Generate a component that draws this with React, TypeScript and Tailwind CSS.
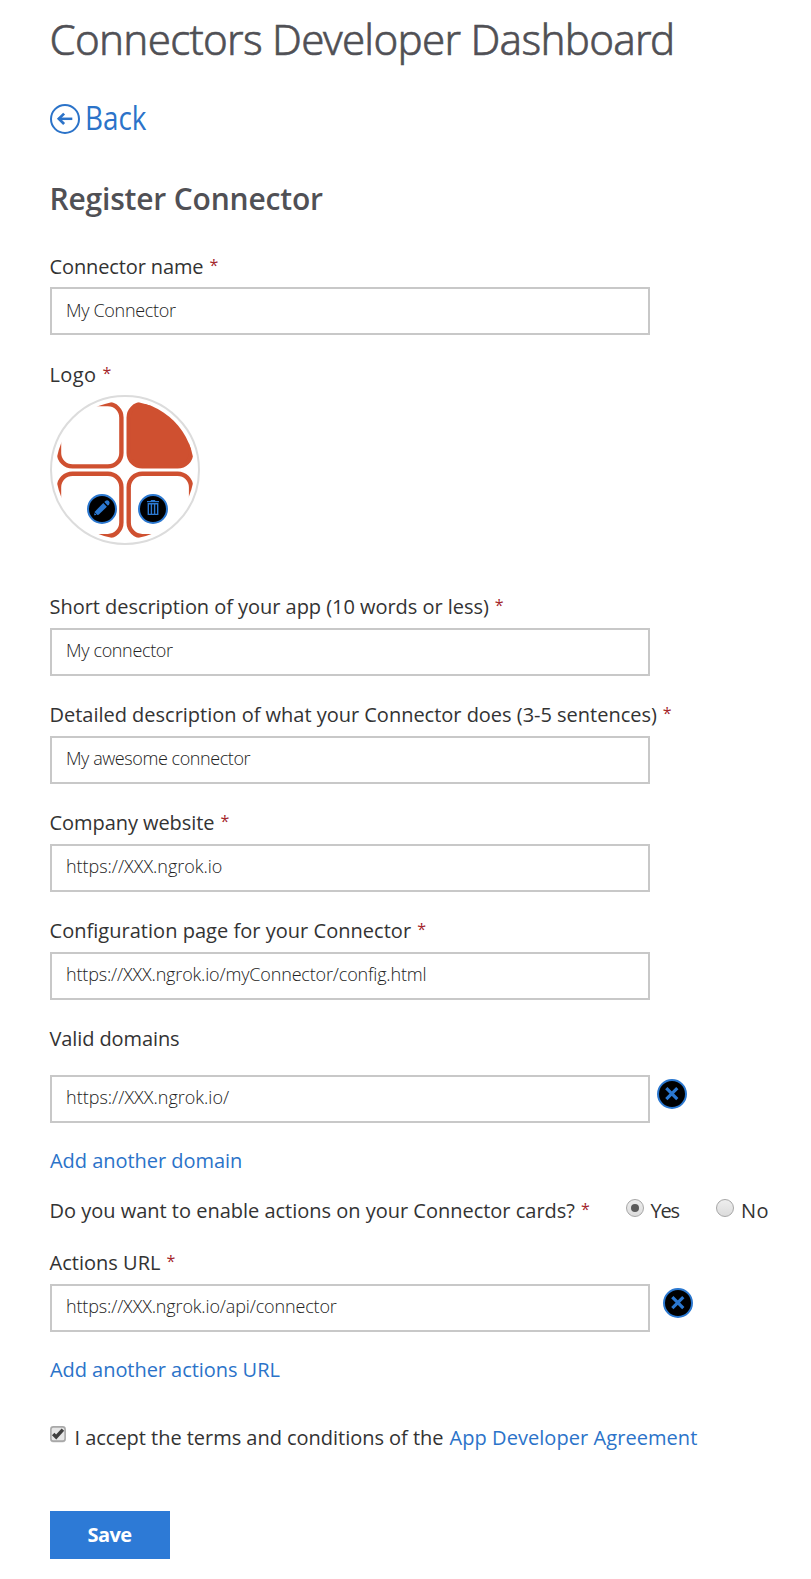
import type { ReactNode } from 'react';

const LABEL = 'block whitespace-nowrap text-[20px] leading-[30px] text-[#333]';
const LINK = 'block w-fit whitespace-nowrap text-[20px] leading-[30px] text-[#2b73c9]';

function Star() {
  return <span className="relative -top-[3px] ml-[6px] text-[16px] leading-none tracking-normal text-[#a4262c]">*</span>;
}

function Label({ children, required = false, tracking = '' }: { children: ReactNode; required?: boolean; tracking?: string }) {
  return (
    <label className={`-ml-[0.5px] ${LABEL}`}>
      <span className={tracking}>{children}</span>
      {required && <Star />}
    </label>
  );
}

function TextBox({ value, tracking, pad = 'pb-1' }: { value: string; tracking: string; pad?: string }) {
  return (
    <input
      type="text"
      defaultValue={value}
      className={`block h-12 w-[600px] shrink-0 rounded-none border-2 border-[#c8c8c8] bg-white pl-[14px] pr-3 text-[18px] font-light text-[#222] outline-none ${pad} ${tracking}`}
    />
  );
}

function Field({ label, value, labelTracking, valueTracking }: { label: string; value: string; labelTracking: string; valueTracking: string }) {
  return (
    <div className="flex flex-col gap-1.5">
      <Label required tracking={labelTracking}>{label}</Label>
      <TextBox value={value} tracking={valueTracking} />
    </div>
  );
}

function RemoveButton() {
  return (
    <button type="button" aria-label="Remove" className="size-[30px] shrink-0">
      <svg viewBox="0 0 30 30" className="size-[30px]">
        <circle cx="15" cy="15" r="14" fill="#000" stroke="#2b78d0" strokeWidth="2" />
        <path d="M9.3 9.1L20.3 20.1M20.3 9.1L9.3 20.1" stroke="#2b78d0" strokeWidth="3.2" />
      </svg>
    </button>
  );
}

function Logo() {
  return (
    <svg viewBox="0 0 150 150" className="size-[150px]">
      <defs>
        <clipPath id="disc">
          <circle cx="75" cy="75" r="69.2" />
        </clipPath>
      </defs>
      <circle cx="75" cy="75" r="74" fill="#fff" stroke="#dcdcdc" strokeWidth="2" />
      <g clipPath="url(#disc)" fill="none" stroke="#cf5030" strokeWidth="4.4">
        <rect x="9" y="9" width="62.4" height="62.4" rx="13.5" />
        <rect x="78.7" y="9" width="62.4" height="62.4" rx="13.5" fill="#cf5030" />
        <rect x="9" y="78.7" width="62.4" height="62.4" rx="13.5" />
        <rect x="78.7" y="78.7" width="62.4" height="62.4" rx="13.5" />
      </g>
      <g transform="translate(37 99)">
        <circle cx="15" cy="15" r="14" fill="#000" stroke="#2b78d0" strokeWidth="2" />
        <path d="M7 21.2L8 17.4L16.3 9.1L19.9 12.7L11.6 20.8Z" fill="#2b78d0" />
        <path d="M7.9 18.8L10 20.9" stroke="#000" strokeWidth="0.8" />
        <path d="M17.3 8.1L18.7 6.8Q20.2 5.7 21.9 7.1Q23.3 8.8 22.2 10.3L20.9 11.7Z" fill="#2b78d0" />
      </g>
      <g transform="translate(88 99)">
        <circle cx="15" cy="15" r="14" fill="#000" stroke="#2b78d0" strokeWidth="2" />
        <path d="M9 7.6H21M12.8 6.6H17.2" stroke="#2b78d0" strokeWidth="1.3" />
        <path d="M10.3 9.8H19.7V20.4H10.3ZM13.4 9.8V20.4M16.6 9.8V20.4" fill="none" stroke="#2b78d0" strokeWidth="1.4" />
      </g>
    </svg>
  );
}

function Radio({ checked = false }: { checked?: boolean }) {
  return (
    <span
      role="radio"
      aria-checked={checked}
      className="mt-[3px] flex size-[18px] shrink-0 items-center justify-center rounded-full border border-[#a6a6a6] bg-linear-to-b from-[#eeeeee] to-[#dcdcdc]"
    >
      {checked && <span className="size-2 rounded-full bg-[#5c5c5c]" />}
    </span>
  );
}

export default function App() {
  return (
    <div className="min-h-[1579px] w-[811px] bg-white pl-[50px] pt-[9px] font-['Open_Sans','Noto_Sans',sans-serif]">
      <h1 className="-ml-[0.5px] h-[58px] whitespace-nowrap font-['Noto_Sans','Open_Sans',sans-serif] text-[42px] font-light leading-[60px] tracking-[-0.71px] text-[#505055] [-webkit-text-stroke:0.6px_#505055]">
        Connectors Developer Dashboard
      </h1>

      <a className="mt-7 flex h-11 w-fit items-start text-[#2b73c9]">
        <svg viewBox="0 0 30 30" className="mt-[9px] size-[30px]" fill="none" stroke="#2b73c9">
          <circle cx="15" cy="15" r="14" strokeWidth="2" />
          <path d="M22.3 14.8H8.4" strokeWidth="2.5" />
          <path d="M14.1 9.6L8.8 14.8L14.1 20" strokeWidth="2.7" />
        </svg>
        <span className="ml-[5px] inline-block origin-left scale-x-[0.87] text-[32px] leading-[46px]">Back</span>
      </a>

      <h2 className="-ml-[0.5px] mt-[38px] h-[42px] whitespace-nowrap text-[30px] font-semibold leading-[44px] tracking-[-0.19px] text-[#505055]">
        Register Connector
      </h2>

      <form className="mt-8 flex flex-col">
        <div className="flex flex-col gap-[5px] pt-px">
          <Label required tracking="tracking-[-0.12px]">Connector name</Label>
          <TextBox value="My Connector" tracking="tracking-[-0.32px]" pad="pb-[2px]" />
        </div>

        <div className="mt-[25px] flex flex-col gap-[5px]">
          <Label required tracking="tracking-[0.4px]">Logo</Label>
          <Logo />
        </div>

        <div className="mt-[47px] flex flex-col gap-6">
          <Field label="Short description of your app (10 words or less)" value="My connector" labelTracking="tracking-[-0.04px]" valueTracking="tracking-[-0.35px]" />
          <Field label="Detailed description of what your Connector does (3-5 sentences)" value="My awesome connector" labelTracking="tracking-[-0.015px]" valueTracking="tracking-[-0.43px]" />
          <Field label="Company website" value="https://XXX.ngrok.io" labelTracking="tracking-[-0.06px]" valueTracking="tracking-[-0.03px]" />
          <Field label="Configuration page for your Connector" value="https://XXX.ngrok.io/myConnector/config.html" labelTracking="tracking-[0.03px]" valueTracking="tracking-[-0.165px]" />
        </div>

        <div className="mt-6">
          <Label tracking="tracking-[-0.1px]">Valid domains</Label>
          <div className="mt-[21px] flex items-start gap-[7px] [&>button]:mt-1">
            <TextBox value="https://XXX.ngrok.io/" tracking="tracking-[0.01px]" />
            <RemoveButton />
          </div>
          <a className={`mt-[23px] tracking-[-0.04px] ${LINK}`}>Add another domain</a>
        </div>

        <div className="mt-5 flex items-start">
          <div className="w-[576px]">
            <Label required tracking="tracking-[-0.01px]">Do you want to enable actions on your Connector cards?</Label>
          </div>
          <div className="flex w-[90px] gap-[6.5px]">
            <Radio checked />
            <span className={`${LABEL} tracking-[-1.2px]`}>Yes</span>
          </div>
          <div className="flex gap-[7px]">
            <Radio />
            <span className={`${LABEL} tracking-[0.5px]`}>No</span>
          </div>
        </div>

        <div className="mt-[22px]">
          <Label required tracking="tracking-[0.02px]">Actions URL</Label>
          <div className="mt-1.5 flex items-start gap-[13px] [&>button]:mt-1">
            <TextBox value="https://XXX.ngrok.io/api/connector" tracking="tracking-[-0.15px]" />
            <RemoveButton />
          </div>
          <a className={`mt-[23px] tracking-[-0.05px] ${LINK}`}>Add another actions URL</a>
        </div>

        <div className="mt-[38px] flex items-start">
          <svg viewBox="0 0 16 17" className="mt-[3px] h-[17px] w-4">
            <rect x="0.4" y="1.6" width="15.2" height="15" rx="3" fill="#d8d8d8" />
            <rect x="0.9" y="0.9" width="14.2" height="14.2" rx="2.4" fill="#e6e6e6" stroke="#a8a8a8" strokeWidth="1.6" />
            <path d="M3.2 8L6.2 11L12.9 3.6" fill="none" stroke="#404040" strokeWidth="3.4" />
          </svg>
          <span className={`${LABEL} ml-[8.5px] tracking-[-0.03px]`}>I accept the terms and conditions of the</span>
          <a className={`ml-[6px] tracking-[0.06px] ${LINK}`}>App Developer Agreement</a>
        </div>

        <button type="button" className="mt-[58px] h-12 w-[120px] bg-[#2d7ad6] pr-px text-[20px] font-bold leading-7 tracking-[-0.6px] text-white">
          Save
        </button>
      </form>
    </div>
  );
}
